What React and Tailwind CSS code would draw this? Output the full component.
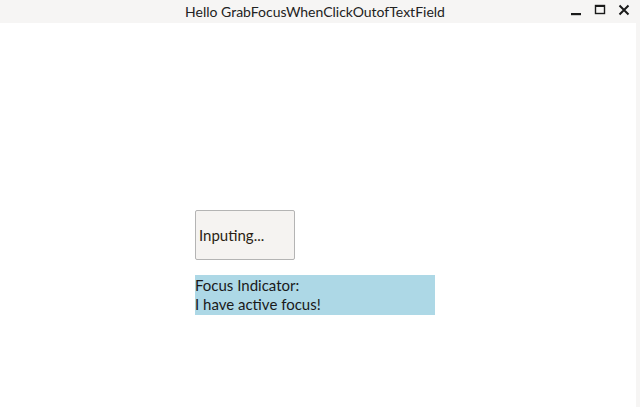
import React from 'react';

export default function App() {
  return (
    <div className="w-[640px] h-[407px] flex flex-col bg-[#f6f5f4] overflow-hidden" style={{ fontFamily: 'Lato, "Open Sans", sans-serif' }}>
      {/* Title bar */}
      <div className="h-[23px] flex items-center relative shrink-0">
        <div className="flex-1 text-center text-[14px] leading-none text-[#222222] pr-[10px]">
          Hello GrabFocusWhenClickOutofTextField
        </div>
        <div className="absolute right-[10px] top-[3px] flex items-center gap-[12px]">
          <svg width="12" height="14" viewBox="0 0 12 14">
            <rect x="1" y="10" width="10" height="2.2" fill="#1a1a1a" />
          </svg>
          <svg width="12" height="14" viewBox="0 0 12 14">
            <rect x="1.5" y="2.5" width="9" height="8" fill="none" stroke="#1a1a1a" strokeWidth="1.4" />
            <rect x="1.5" y="2.5" width="9" height="1.5" fill="#1a1a1a" />
          </svg>
          <svg width="12" height="14" viewBox="0 0 12 14">
            <path d="M1.5 2.5 L10.5 11.5 M10.5 2.5 L1.5 11.5" stroke="#1a1a1a" strokeWidth="2" />
          </svg>
        </div>
      </div>

      {/* Content */}
      <div className="flex-1 flex">
        <div className="w-[636px] bg-white pl-[195px] pt-[187px]">
          <div className="w-[100px] h-[50px] bg-[#f5f3f1] border border-[#b4b4b4] rounded-[2px] flex items-center pl-[3px] text-[15px] text-[#2a1e14]">
            Inputing...
          </div>
          <div className="mt-[15px] w-[240px] h-[40px] bg-[#add8e6] text-[15px] leading-[19px] text-[#1a1a1a] pt-[1px]">
            <div>Focus Indicator:</div>
            <div>I have active focus!</div>
          </div>
        </div>
      </div>
    </div>
  );
}
